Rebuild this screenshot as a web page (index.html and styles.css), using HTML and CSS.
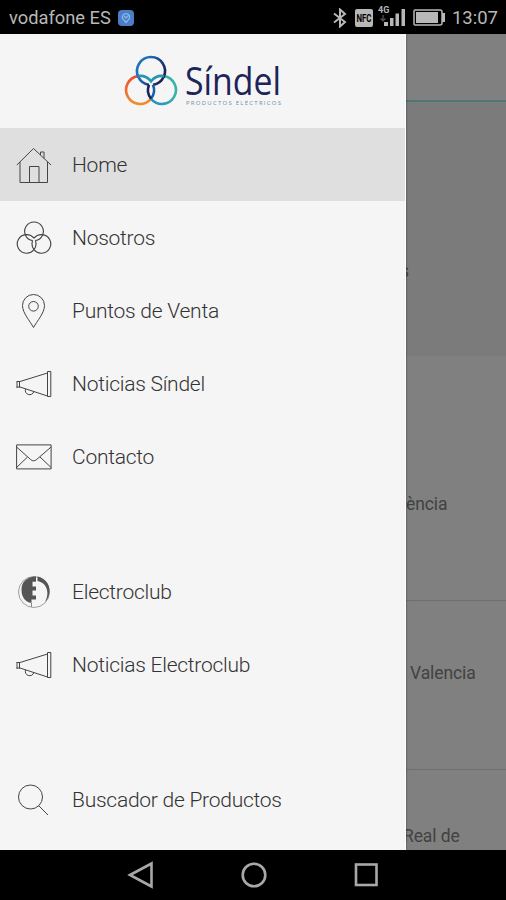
FILE: index.html
```html
<!DOCTYPE html>
<html lang="es">
<head>
    <meta charset="UTF-8">
    <meta name="viewport" content="width=device-width, initial-scale=1.0">
    <title>Síndel</title>
    <link rel="stylesheet" href="styles.css">
</head>
<body>
    <div class="status-bar">
        <span class="carrier">vodafone ES</span>
        <svg class="app-badge" width="16" height="16" viewBox="0 0 16 16">
            <rect width="16" height="16" rx="4" fill="#4a7fc8"/>
            <path d="M8 12.500 4.500 8.500a3.700 3.700 0 1 1 7 0zM6 6l2 2 2.500-2.500" fill="none" stroke="#8fb6e8" stroke-width="1.200"/>
        </svg>
        <div class="status-icons">
            <svg class="bluetooth" width="14" height="20" viewBox="0 0 14 20">
                <path d="M1 5.500 12 14l-5 4.500v-17L12 6 1 14.500" fill="none" stroke="#b8b8b8" stroke-width="2"/>
            </svg>
            <svg class="nfc" width="18" height="18" viewBox="0 0 18 18">
                <rect width="18" height="18" rx="2" fill="#b8b8b8"/>
                <text x="9" y="13" text-anchor="middle" textLength="15" lengthAdjust="spacingAndGlyphs">NFC</text>
            </svg>
            <svg class="signal" width="28" height="24" viewBox="0 0 28 24">
                <text x="0" y="9">4G</text>
                <path d="M5 11v6M2.500 14.500 5 17l2.500-2.500" fill="none" stroke="#555" stroke-width="1.200"/>
                <path d="M6 18h4v4H6zM12 14h3.500v8H12zM17.500 9.500H21V22h-3.500zM23.500 5H27v17h-3.500z" fill="#b8b8b8"/>
            </svg>
            <svg class="battery" width="33" height="17" viewBox="0 0 33 17">
                <path d="M2 1h25a2 2 0 0 1 2 2v11a2 2 0 0 1-2 2H2a1 1 0 0 1-1-1V2a1 1 0 0 1 1-1z" fill="none" stroke="#b8b8b8" stroke-width="1.500"/>
                <path d="M3 3h22v11H3zM29 4h3v9h-3z" fill="#b8b8b8"/>
            </svg>
            <span class="clock">13:07</span>
        </div>
    </div>

    <div class="screen">
        <nav class="drawer">
            <div class="logo">
                <svg width="54" height="52" viewBox="124 55 54 52" fill="none" stroke-width="2.600">
                    <defs>
                        <linearGradient id="top" x1="0" y1="0" x2="1" y2="0.500">
                            <stop offset="0.300" stop-color="#1b73bd"/>
                            <stop offset="1" stop-color="#1c2458"/>
                        </linearGradient>
                        <linearGradient id="left" x1="0" y1="0" x2="0" y2="1">
                            <stop offset="0" stop-color="#e8502e"/>
                            <stop offset="1" stop-color="#f58a2c"/>
                        </linearGradient>
                        <linearGradient id="right" x1="0" y1="1" x2="1" y2="0">
                            <stop offset="0" stop-color="#1b8fc4"/>
                            <stop offset="0.600" stop-color="#3bb3ad"/>
                        </linearGradient>
                    </defs>
                    <path d="M138 76.100A14 14 0 1 0 151 98.700" stroke="url(#left)"/>
                    <path d="M164 76.100A14 14 0 1 1 151 98.700" stroke="url(#right)"/>
                    <path d="M153 84.850A14 14 0 1 0 149 84.850" stroke="url(#top)"/>
                    <path d="M138 76.100A14 14 0 0 1 151 81.300A14 14 0 0 1 164 76.100" stroke="#2496b0"/>
                    <path d="M151 98.700A14 14 0 0 0 153 84.850" stroke="#1b5ea8"/>
                    <path d="M151 98.700A14 14 0 0 1 149 84.850" stroke="#1c2458"/>
                </svg>
                <svg class="wordmark" width="100" height="56" viewBox="0 0 100 56">
                    <text class="brand" x="0" y="42" textLength="96" lengthAdjust="spacingAndGlyphs">Síndel</text>
                    <text class="tagline" x="1" y="52" textLength="95">PRODUCTOS ELÉCTRICOS</text>
                </svg>
            </div>

            <ul class="menu">
                <li class="active">
                    <svg width="36" height="38" viewBox="0 0 36 38">
                        <path d="M.8 19 17.500 2.500 35 19M4 16v20.500h27.500V16M13.500 36V20.500H23V36M24.500 9V6h3.500v6.500"/>
                    </svg>
                    <span>Home</span>
                </li>
                <li>
                    <svg width="36" height="36" viewBox="124 55 54 52" stroke-width="1.700">
                        <path d="M153 84.850A14 14 0 1 0 149 84.850M151 81.300A14 14 0 1 0 153 84.850M151 81.300A14 14 0 1 1 149 84.850"/>
                    </svg>
                    <span>Nosotros</span>
                </li>
                <li>
                    <svg width="36" height="36" viewBox="0 0 36 36">
                        <path d="M17.500 34.500C14 28 6.500 20 6.500 12.500a11 11 0 0 1 22 0c0 7.500-7.500 15.500-11 22z"/>
                        <circle cx="17.500" cy="13.300" r="4.800"/>
                    </svg>
                    <span>Puntos de Venta</span>
                </li>
                <li>
                    <svg width="36" height="30" viewBox="0 0 36 30">
                        <path d="M1 12v7M3.500 12v6.500M.8 12.500 4 12.500 31.500 4v23L4 18H.8M31.500 2.500h3.300v25h-3.300zM9.500 20a4.200 4.200 0 0 0 8.300 2.700"/>
                    </svg>
                    <span>Noticias Síndel</span>
                </li>
                <li>
                    <svg width="36" height="26" viewBox="0 0 36 26">
                        <path d="M.6.900h34.500v24H.6zM.6 3l14 12.500c2 1.800 4 1.800 6 0L35.100 3M.6 23.500 11.500 13M35.100 23.500 24 13"/>
                    </svg>
                    <span>Contacto</span>
                </li>
            </ul>

            <ul class="menu">
                <li>
                    <svg width="36" height="34" viewBox="0 0 36 34">
                        <circle cx="18" cy="17" r="15.500" stroke="#888" stroke-width="0.800"/>
                        <path class="solid" d="M20 1.500v5.300h-3.500v4.700H20v4h-3.500v5H20v4h-4.500v3.500C9 27 5.500 22 5.500 14.500 5.500 7 11 1.500 20 1.500z"/>
                        <path class="solid" d="M21.500 1.500C29 3 33.800 9 33.500 16c0 5-2 8.500-4.500 11 2-4 3-8 2-12-1-5-4.500-8-9.500-9z"/>
                        <path d="M15.500 28v4" stroke="#888"/>
                    </svg>
                    <span>Electroclub</span>
                </li>
                <li>
                    <svg width="36" height="30" viewBox="0 0 36 30">
                        <path d="M1 12v7M3.500 12v6.500M.8 12.500 4 12.500 31.500 4v23L4 18H.8M31.500 2.500h3.300v25h-3.300zM9.500 20a4.200 4.200 0 0 0 8.300 2.700"/>
                    </svg>
                    <span>Noticias Electroclub</span>
                </li>
            </ul>

            <ul class="menu">
                <li>
                    <svg width="36" height="34" viewBox="0 0 36 34">
                        <circle cx="14.500" cy="14" r="12"/>
                        <path d="M22.500 22.500 32 32"/>
                    </svg>
                    <span>Buscador de Productos</span>
                </li>
            </ul>
        </nav>

        <main class="page">
            <div class="page-header"></div>
            <div class="banner"><span>s</span></div>
            <div class="entry first"><span>ència</span></div>
            <div class="entry"><span class="venue">Valencia</span></div>
            <div class="entry last"><span class="cut">Real de</span></div>
        </main>
    </div>

    <div class="nav-bar">
        <svg width="28" height="28" viewBox="0 0 28 28"><path d="M3 14 24.500 2.500v23z"/></svg>
        <svg width="28" height="28" viewBox="0 0 28 28"><circle cx="14" cy="14" r="11.300"/></svg>
        <svg width="28" height="28" viewBox="0 0 28 28"><rect x="4" y="3.500" width="20.500" height="20.500"/></svg>
    </div>
</body>
</html>
```
FILE: styles.css
```css
* {
    box-sizing: border-box;
}
body {
    margin: 0;
    height: 900px;
    display: flex;
    flex-direction: column;
    background: #000;
    font-family: Roboto, "Liberation Sans", sans-serif;
    overflow: hidden;
}
.status-bar {
    height: 34px;
    display: flex;
    align-items: center;
    padding: 1px 8px 0 9px;
    color: #b8b8b8;
    font-size: 18.3px;
}
.app-badge {
    margin-left: 7px;
}
.status-icons {
    margin-left: auto;
    display: flex;
    align-items: center;
}
.nfc {
    margin-left: 8px;
}
.nfc text {
    font-size: 10px;
    font-weight: 700;
    fill: #000;
}
.signal {
    margin: -3px 0 0 5px;
}
.signal text {
    font-size: 9px;
    font-weight: 700;
    fill: #b8b8b8;
}
.battery {
    margin: 0 6px 0 7px;
}
.clock {
    font-size: 18.5px;
}
.screen {
    height: 816px;
    display: flex;
}
.drawer {
    width: 406px;
    background: #f5f5f5;
    border-right: 1px solid #fff;
    position: relative;
    box-shadow: 0 0 2px rgba(0, 0, 0, 0.5);
}
.logo {
    height: 94px;
    display: flex;
    align-items: center;
    padding-left: 124px;
    gap: 7px;
}
.brand {
    font-family: "Open Sans", sans-serif;
    font-size: 37.5px;
    fill: #1c2458;
}
.tagline {
    font-family: "Open Sans", sans-serif;
    font-size: 6px;
    fill: #6d8fa8;
}
.menu {
    list-style: none;
    margin: 0 0 62px;
    padding: 0;
}
.menu li {
    height: 73.1px;
    display: flex;
    align-items: center;
    gap: 20px;
    padding-left: 16px;
    color: #333;
    font-size: 21px;
    font-weight: 300;
    letter-spacing: -0.25px;
}
.menu .active {
    background: #dfdfdf;
}
.menu svg {
    fill: none;
    stroke: #444;
}
.menu .solid {
    fill: #555;
    stroke: none;
}
.page {
    flex: 1;
    background: #808080;
    overflow: hidden;
    color: #424242;
    font-size: 17.5px;
    letter-spacing: -0.1px;
    white-space: nowrap;
}
.page-header {
    height: 68px;
    border-bottom: 2px solid #527575;
}
.banner {
    height: 254px;
    background: #7b7b7b;
    padding-top: 159px;
}
.banner span {
    margin-left: -6px;
}
.entry {
    height: 169px;
    padding-top: 62px;
    border-bottom: 1px solid #6f6f6f;
}
.first {
    height: 245px;
    padding-top: 138px;
}
.last {
    padding-top: 56px;
    border: 0;
}
.venue {
    margin-left: 4px;
}
.cut {
    margin-left: -3px;
}
.nav-bar {
    height: 50px;
    display: flex;
    justify-content: center;
    align-items: center;
    gap: 84.5px;
    padding-left: 1px;
}
.nav-bar svg {
    fill: none;
    stroke: #a8a8a8;
    stroke-width: 2.6;
}
```
